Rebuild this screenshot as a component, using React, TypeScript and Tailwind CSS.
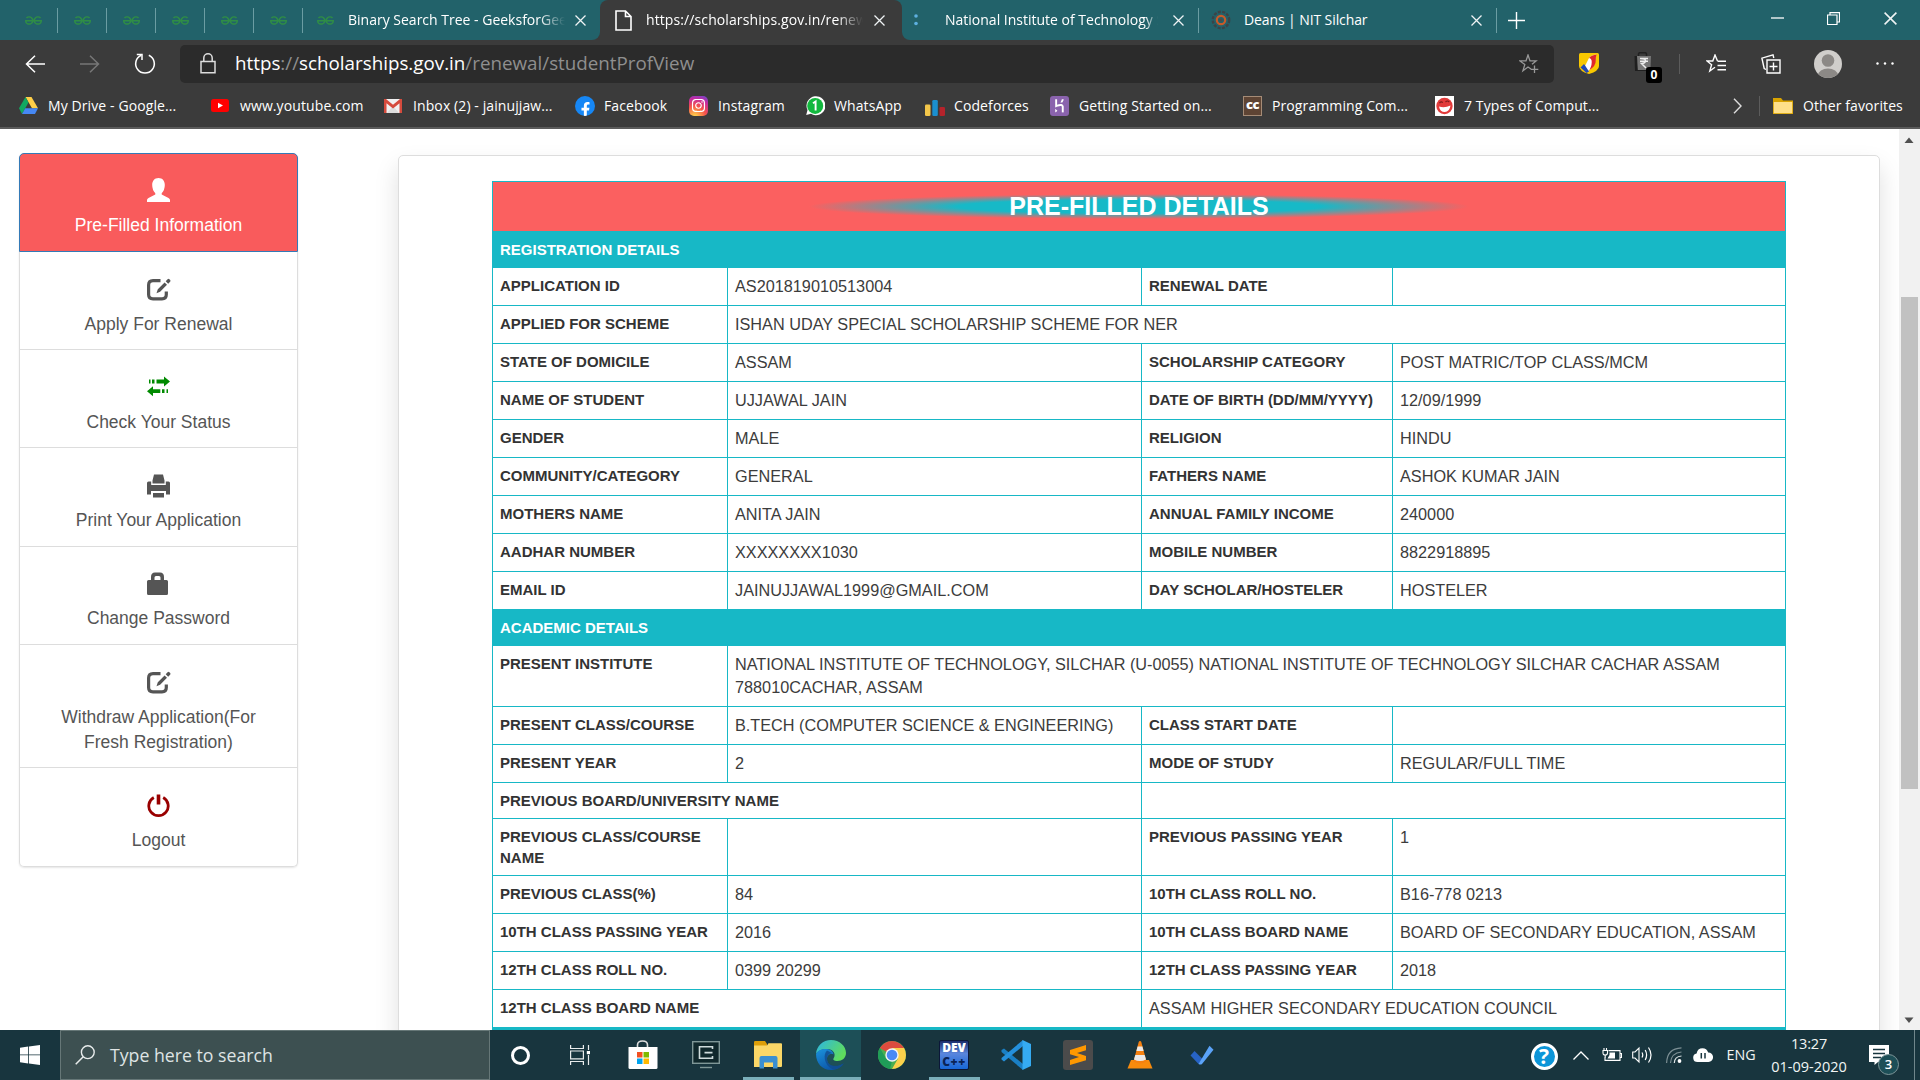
import React from "react";
import { SiGeeksforgeeks, SiHeroku } from "react-icons/si";
import { FaInstagram, FaFacebookF } from "react-icons/fa";

type Kids = { children?: React.ReactNode };

/* ---------- small building blocks ---------- */

function Slot({ w, children }: Kids & { w: string }) {
  return <div className={`flex h-full shrink-0 items-center justify-center ${w}`}>{children}</div>;
}

function CloseX({ size = 11 }: { size?: number }) {
  return (
    <svg width={size} height={size} viewBox="0 0 11 11" className="shrink-0">
      <path d="M0.5 0.5L10.5 10.5M10.5 0.5L0.5 10.5" stroke="#f0f4f5" strokeWidth="1.3" fill="none" />
    </svg>
  );
}

function TabDivider() {
  return <div className="h-[25px] w-px shrink-0 bg-[#6b9da3]" />;
}

function Gfg() {
  return <SiGeeksforgeeks className="text-[#2f8d46]" size={17} />;
}

/* ---------- tab strip ---------- */

function TabStrip() {
  return (
    <div className="flex h-10 shrink-0 bg-[#22626a] text-[14px] text-white">
      <div className="shrink-0 bg-[#3b3b3b]">
        <div className="flex h-10 w-[600px] items-center rounded-br-lg bg-[#22626a]">
          <Slot w="w-[9px]" />
          {[0, 1, 2, 3, 4, 5].map((i) => (
            <React.Fragment key={i}>
              <Slot w="w-[48px]">
                <Gfg />
              </Slot>
              <TabDivider />
            </React.Fragment>
          ))}
          <Slot w="w-[45px]">
            <Gfg />
          </Slot>
          <div className="w-[217px] shrink-0 overflow-hidden whitespace-nowrap pb-[2px] [mask-image:linear-gradient(to_right,black_88%,transparent)]">
            Binary Search Tree - GeeksforGeeks
          </div>
          <Slot w="w-[31px]">
            <CloseX />
          </Slot>
        </div>
      </div>
      <div className="flex h-10 w-[302px] shrink-0 items-center rounded-t-lg bg-[#3b3b3b]">
        <Slot w="w-[46px]">
          <svg width="17" height="21" viewBox="0 0 17 21">
            <path d="M1 1H10.5L16 6.5V20H1ZM10.5 1V6.5H16" fill="none" stroke="#fff" strokeWidth="1.6" />
          </svg>
        </Slot>
        <div className="w-[217px] shrink-0 overflow-hidden whitespace-nowrap pb-[2px] tracking-[0.1px] [mask-image:linear-gradient(to_right,black_88%,transparent)]">
          https://scholarships.gov.in/renewal/
        </div>
        <Slot w="w-[32px]">
          <CloseX />
        </Slot>
      </div>
      <div className="min-w-0 grow bg-[#3b3b3b]">
        <div className="flex h-10 items-center rounded-bl-lg bg-[#22626a]">
          <Slot w="w-[28px]">
            <svg width="6" height="12" viewBox="0 0 6 12">
              <circle cx="3" cy="2" r="1.8" fill="#5eb0e0" />
              <circle cx="3" cy="9.5" r="1.8" fill="#5eb0e0" />
            </svg>
          </Slot>
          <div className="ml-[15px] w-[213px] shrink-0 overflow-hidden whitespace-nowrap pb-[2px] [mask-image:linear-gradient(to_right,black_94%,transparent)]">
            National Institute of Technology Silchar
          </div>
          <Slot w="w-[40px]">
            <CloseX />
          </Slot>
          <TabDivider />
          <Slot w="w-[44px]">
            <svg width="20" height="20" viewBox="0 0 20 20">
              <circle cx="10" cy="10" r="8.2" fill="none" stroke="#3a4448" strokeWidth="2.4" strokeDasharray="3 1.4" />
              <circle cx="10" cy="10" r="4.2" fill="none" stroke="#c65a2a" strokeWidth="2.2" />
              <circle cx="10" cy="10" r="1.5" fill="#4b4a48" />
            </svg>
          </Slot>
          <div className="w-[213px] shrink-0 pb-[2px] pl-px tracking-[-0.1px]">Deans | NIT Silchar</div>
          <Slot w="w-[40px]">
            <CloseX />
          </Slot>
          <TabDivider />
          <Slot w="w-[39px]">
            <svg width="17" height="17" viewBox="0 0 17 17">
              <path d="M8.5 0V17M0 8.5H17" stroke="#fff" strokeWidth="1.4" />
            </svg>
          </Slot>
          <div className="grow" />
          <div className="flex h-full items-center pb-1">
            <Slot w="w-[56px]">
              <svg width="13" height="2" viewBox="0 0 13 2">
                <path d="M0 1H13" stroke="#fff" strokeWidth="1.3" />
              </svg>
            </Slot>
            <Slot w="w-[56px]">
              <svg width="13" height="13" viewBox="0 0 13 13">
                <path d="M0.5 3H10V12.5H0.5ZM3 3V0.6H12.5V10H10" fill="none" stroke="#fff" strokeWidth="1.2" />
              </svg>
            </Slot>
            <Slot w="w-[59px]">
              <CloseX size={13} />
            </Slot>
          </div>
        </div>
      </div>
    </div>
  );
}

/* ---------- address bar ---------- */

function AddressRow() {
  return (
    <div className="flex h-[47px] shrink-0 items-center">
      <Slot w="w-[70px]">
        <svg width="20" height="18" viewBox="0 0 20 18">
          <path d="M20 9H1.5M10 0.8L1.5 9L10 17.2" fill="none" stroke="#fff" strokeWidth="1.5" />
        </svg>
      </Slot>
      <Slot w="w-[40px]">
        <svg width="20" height="18" viewBox="0 0 20 18">
          <path d="M0 9H18.500M10 0.8L18.500 9L10 17.2" fill="none" stroke="#777" strokeWidth="1.5" />
        </svg>
      </Slot>
      <Slot w="w-[70px]">
        <svg width="22" height="22" viewBox="0 0 22 22">
          <path d="M7.200 2.300A9.300 9.300 0 1 0 14.800 2.300" fill="none" stroke="#fff" strokeWidth="1.5" />
          <path d="M2.800 1.400H8V7" fill="none" stroke="#fff" strokeWidth="1.5" />
        </svg>
      </Slot>
      <div className="flex h-[38px] w-[1374px] shrink-0 items-center rounded-[5px] bg-[#2b2b2b]">
        <Slot w="w-[55px]">
          <svg width="16" height="21" viewBox="0 0 16 21">
            <path d="M1 8.500H15V19.800H1ZM3.800 8.500V5A4.200 4.200 0 0 1 12.200 5V8.500" fill="none" stroke="#ddd" strokeWidth="1.5" />
          </svg>
        </Slot>
        <div className="grow whitespace-nowrap text-[18.8px] text-[#8f8f8f]">
          <span className="text-white">https</span>://<span className="text-white">scholarships.gov.in</span>
          /renewal/studentProfView
        </div>
        <Slot w="w-[50px]">
          <svg width="20" height="20" viewBox="0 0 20 20">
            <path d="M12 15L9 13L3.900 16.800L5.800 10.600L0.900 6.900H7L9 1L11 6.900H17.100L13 10.200" fill="none" stroke="#999" strokeWidth="1.300" />
            <path d="M15.500 11.500V19M11.700 15.300H19.300" stroke="#999" strokeWidth="1.300" />
          </svg>
        </Slot>
      </div>
      <Slot w="w-[70px]">
        <svg width="20" height="21" viewBox="0 0 20 21">
          <path d="M0 1.500Q0 0 1.500 0H18.500Q20 0 20 1.500V13Q20 18 10 21Q0 18 0 13Z" fill="#f9c800" />
          <path d="M6 13L10 5Q12 2 17.500 1.500Q16.500 6 16 9Q15 14 9 18Z" fill="#fff" />
          <path d="M10 5Q12 2 17.800 1.500Q16.500 4 16.800 7Q17 13 10.500 17Q13.500 11 12.500 7Q11.500 5 10 5Z" fill="#e0262b" />
          <path d="M1.500 14.500L5 11L10 18.500L7.500 20Z" fill="#2349b5" />
        </svg>
      </Slot>
      <Slot w="w-[40px]">
        <div className="relative h-[24px] w-[20px]">
          <svg width="18" height="20" viewBox="0 0 18 20">
            <path d="M0.500 4H17L16 19H1Z" fill="#1f1f1f" />
            <path d="M4.500 5V2Q4.500 0.700 6 0.700H11Q12.500 0.700 12.500 2V5" fill="none" stroke="#222" strokeWidth="1.500" />
            <path d="M3 4H17L16.500 18H3.800Z" fill="#777" />
            <path d="M6 6.500H14M6 9.200H14M6.500 6.500Q12 6.500 11.500 9.200Q11 11.500 7.500 11.500L12 16" fill="none" stroke="#eee" strokeWidth="1.500" />
          </svg>
          <div className="absolute left-[12px] top-[15px] flex h-[16px] w-[16px] items-center justify-center rounded-[3px] bg-black text-[12px] font-bold text-white">
            0
          </div>
        </div>
      </Slot>
      <Slot w="w-[31px]">
        <div className="h-5 w-px bg-[#5c5c5c]" />
      </Slot>
      <Slot w="w-[42px]">
        <svg width="21" height="20" viewBox="0 0 21 20">
          <path d="M11.500 7L9 1L6.800 7H1L5.600 10.700L3.800 17L9 13.300" fill="none" stroke="#fff" strokeWidth="1.400" />
          <path d="M11.500 7.200H20M11.500 11.500H20M11.500 15.800H20" stroke="#fff" strokeWidth="1.500" />
        </svg>
      </Slot>
      <Slot w="w-[68px]">
        <svg width="20" height="20" viewBox="0 0 20 20">
          <path d="M6 6H19V19H6Z" fill="none" stroke="#fff" strokeWidth="1.400" />
          <path d="M12.500 8.500V16.500M8.500 12.500H16.500M5 15.500L3.200 14.500L0.900 4.200L12 0.900L12.800 4" fill="none" stroke="#fff" strokeWidth="1.400" />
        </svg>
      </Slot>
      <Slot w="w-[46px]">
        <svg width="28" height="28" viewBox="0 0 28 28">
          <defs>
            <clipPath id="avatarRound">
              <circle cx="14" cy="14" r="14" />
            </clipPath>
          </defs>
          <g clipPath="url(#avatarRound)">
            <rect width="28" height="28" fill="#d0cecb" />
            <circle cx="14" cy="10.500" r="6.300" fill="#8c8986" />
            <ellipse cx="14" cy="25.500" rx="10" ry="7" fill="#8c8986" />
          </g>
        </svg>
      </Slot>
      <Slot w="w-[68px]">
        <svg width="18" height="3" viewBox="0 0 18 3">
          <circle cx="1.500" cy="1.500" r="1.200" fill="#fff" />
          <circle cx="9" cy="1.500" r="1.200" fill="#fff" />
          <circle cx="16.500" cy="1.500" r="1.200" fill="#fff" />
        </svg>
      </Slot>
    </div>
  );
}

/* ---------- bookmarks ---------- */

function DriveIcon() {
  return (
    <svg width="19" height="17" viewBox="0 0 19 17">
      <path d="M6.500 0H12.500L19 11.300H13Z" fill="#ffcf48" />
      <path d="M6.500 0L0 11.300L3 17L9.500 5.500Z" fill="#11a861" />
      <path d="M3 17L6.200 11.300H19L16 17Z" fill="#4688f4" />
    </svg>
  );
}
function YoutubeIcon() {
  return (
    <svg width="18" height="13" viewBox="0 0 18 13">
      <rect width="18" height="13" rx="2.500" fill="#f00" />
      <path d="M7 3.700L12 6.500L7 9.300Z" fill="#fff" />
    </svg>
  );
}
function GmailIcon() {
  return (
    <svg width="18" height="14" viewBox="0 0 18 14">
      <rect width="18" height="14" rx="1" fill="#f1f1f1" />
      <path d="M3 14L9 7L15 14Z" fill="#ddd" />
      <path d="M0 0H2L9 5.800L16 0H18V14H15.500V4.300L9 9.400L2.500 4.300V14H0Z" fill="#d54b3d" />
    </svg>
  );
}
function FacebookIcon() {
  return (
    <div className="flex h-5 w-5 items-end justify-center overflow-hidden rounded-full bg-[#1687f5]">
      <FaFacebookF size={15} color="#fff" className="-mb-px" />
    </div>
  );
}
function InstaIcon() {
  return (
    <div className="flex h-5 w-[19px] items-center justify-center rounded-[5px] bg-[radial-gradient(circle_at_30%_105%,#fdc74a_8%,#f5524b_45%,#c32aa3_75%,#5a4fd6_100%)]">
      <FaInstagram size={15} color="#fff" />
    </div>
  );
}
function WhatsappIcon() {
  return (
    <svg width="20" height="20" viewBox="0 0 20 20">
      <path d="M1.200 19L2.500 14A9.500 9.500 0 1 1 6 17.800Z" fill="#fff" />
      <circle cx="10.200" cy="9.900" r="8" fill="#12b83e" />
      <path d="M8 7.200L10.600 5.500V14.500" fill="none" stroke="#fff" strokeWidth="1.900" />
    </svg>
  );
}
function CodeforcesIcon() {
  return (
    <svg width="20" height="17" viewBox="0 0 20 17" className="mt-1">
      <rect x="0" y="5.500" width="5.500" height="11.500" rx="1.300" fill="#f3c64a" />
      <rect x="7.300" y="1" width="5.500" height="16" rx="1.300" fill="#1b8fcf" />
      <rect x="14.500" y="8" width="5.500" height="9" rx="1.300" fill="#b5232b" />
    </svg>
  );
}
function HerokuIcon() {
  return (
    <div className="flex h-5 w-[19px] items-center justify-center overflow-hidden rounded-[3px] bg-[#8a63ad]">
      <SiHeroku size={20} color="#fff" className="[clip-path:inset(3px_4px)]" />
    </div>
  );
}
function CcIcon() {
  return (
    <div className="flex h-5 w-[19px] items-center justify-center border border-[#a58b76] bg-[#5e4434] pb-[2px] text-[13px] font-extrabold tracking-[-0.5px] text-white">
      cc
    </div>
  );
}
function RedditishIcon() {
  return (
    <svg width="19" height="20" viewBox="0 0 19 20">
      <rect width="19" height="20" fill="#fff" />
      <circle cx="9.500" cy="10" r="8.200" fill="#e23b3b" />
      <path d="M4 10.500Q9.500 12.500 15.500 9.500Q14.500 16 9.800 16Q5 16 4 10.500Z" fill="#fff" />
      <path d="M4.500 7.200Q6 5 7.800 6.600M10.500 6Q12.500 4 14.200 6" fill="none" stroke="#7d1d1d" strokeWidth="1.200" />
    </svg>
  );
}

const bookmarks = [
  { w: "w-[192px]", icon: <DriveIcon />, t: "My Drive - Google..." },
  { w: "w-[173px]", icon: <YoutubeIcon />, t: "www.youtube.com" },
  { w: "w-[191px]", icon: <GmailIcon />, t: "Inbox (2) - jainujjaw..." },
  { w: "w-[114px]", icon: <FacebookIcon />, t: "Facebook" },
  { w: "w-[116px]", icon: <InstaIcon />, t: "Instagram" },
  { w: "w-[120px]", icon: <WhatsappIcon />, t: "WhatsApp" },
  { w: "w-[125px]", icon: <CodeforcesIcon />, t: "Codeforces" },
  { w: "w-[193px]", icon: <HerokuIcon />, t: "Getting Started on..." },
  { w: "w-[192px]", icon: <CcIcon />, t: "Programming Com..." },
  { w: "w-[190px]", icon: <RedditishIcon />, t: "7 Types of Comput..." },
];

function Bookmarks() {
  return (
    <div className="flex h-[42px] shrink-0 items-center border-b-2 border-[#5b5b5b] pb-[3px] pl-[19px] text-[14px] tracking-[0.1px] text-white">
      {bookmarks.map((b) => (
        <div key={b.t} className={`flex shrink-0 items-center whitespace-nowrap ${b.w}`}>
          <div className="flex w-[29px] shrink-0 items-center">{b.icon}</div>
          <span className="-mt-px">{b.t}</span>
        </div>
      ))}
      <div className="grow" />
      <svg width="9" height="16" viewBox="0 0 9 16">
        <path d="M1 0.800L8 8L1 15.200" fill="none" stroke="#ddd" strokeWidth="1.400" />
      </svg>
      <div className="ml-[17px] h-5 w-px bg-[#5c5c5c]" />
      <svg width="20" height="16" viewBox="0 0 20 16" className="ml-[13px]">
        <path d="M0 0H8L10 2.500H20V16H0Z" fill="#d9a300" />
        <path d="M0.800 4H19.200V15.200H0.800Z" fill="#ffe08a" />
      </svg>
      <div className="-mt-px ml-[10px] w-[117px] whitespace-nowrap">Other favorites</div>
    </div>
  );
}

/* ---------- sidebar ---------- */

const UserGlyph = () => (
  <svg width="23" height="24" viewBox="0 0 23 24">
    <path d="M11.500 0C7.500 0 5.200 2.800 5.200 7Q5.200 12 8.300 15.200V16.500L1.500 20Q0 20.800 0 22V24H23V22Q23 20.800 21.500 20L14.700 16.500V15.200Q17.800 12 17.800 7C17.800 2.800 15.500 0 11.500 0Z" fill="#fff" />
  </svg>
);
const EditGlyph = () => (
  <svg width="24" height="24" viewBox="0 0 24 24">
    <path d="M13.500 2.600H6Q1.600 2.600 1.600 7V16.500Q1.600 20.800 6 20.800H15Q19.300 20.800 19.300 16.500V13.500" fill="none" stroke="#555" strokeWidth="3.200" />
    <path d="M9.500 15.200L10.800 11.300L17.600 4.400L20 6.800L13.100 13.800ZM18.700 3.200L20.600 1.200Q21.500 0.500 22.400 1.300L23.200 2.100Q23.900 3 23.100 3.800L21.200 5.700Z" fill="#555" />
  </svg>
);
const TransferGlyph = () => (
  <svg width="23" height="24" viewBox="0 0 23 24">
    <path d="M2 3.500H3.500V7.500H2ZM5 3.500H7.500V7.500H5ZM9.500 3.500H17V0.500L23 5.500L17 10.500V7.500H9.500ZM21 13.300H19.500V17H21ZM17.500 13.300H15V17H17.500ZM13.300 13.300H6V10.300L0 15.200L6 20.300V17H13.300Z" fill="#008a00" />
  </svg>
);
const PrintGlyph = () => (
  <svg width="23" height="24" viewBox="0 0 23 24">
    <path d="M7 0.500H16L17.500 6.500V9.500H5.500V6.500ZM0 9Q0 7.500 1.500 7.500H4.200V11H18.800V7.500H21.500Q23 7.500 23 9V20.500H19V17H4V20.500H0ZM6 19H17V23.500H6Z" fill="#555" />
  </svg>
);
const LockGlyph = () => (
  <svg width="23" height="24" viewBox="0 0 23 24">
    <path d="M0 9.500Q0 8 1.500 8H4V5Q4 0.500 8 0.500H13Q17 0.500 17 5V8H19.500Q21 8 21 9.500V21.500Q21 23 19.500 23H1.500Q0 23 0 21.500ZM7.500 8H13.500V5.500Q13.500 4 12 4H9Q7.500 4 7.500 5.500Z" fill="#555" />
  </svg>
);
const PowerGlyph = () => (
  <svg width="23" height="24" viewBox="0 0 23 24">
    <path d="M6.800 3.500A9.700 9.700 0 1 0 16.200 3.500" fill="none" stroke="#900" strokeWidth="2.800" />
    <rect x="9.700" y="0.500" width="3.600" height="10" fill="#900" />
  </svg>
);

const menu = [
  { h: "h-[98px] pt-[26px]", icon: <EditGlyph />, t: "Apply For Renewal" },
  { h: "h-[98px] pt-[26px]", icon: <TransferGlyph />, t: "Check Your Status" },
  { h: "h-[99px] pt-[26px]", icon: <PrintGlyph />, t: "Print Your Application" },
  { h: "h-[98px] pt-[25px]", icon: <LockGlyph />, t: "Change Password" },
  { h: "h-[123px] pt-[26px]", icon: <EditGlyph />, t: "Withdraw Application(For Fresh Registration)" },
  { h: "h-[99px] pt-[26px]", icon: <PowerGlyph />, t: "Logout" },
];

function Sidebar() {
  return (
    <div className="ml-[19px] mt-6 w-[279px] shrink-0 self-start rounded-[5px] text-center text-[17.5px] leading-[25px] text-[#555] shadow-[0_1px_2px_rgba(0,0,0,0.1)]">
      <div className="flex h-[99px] flex-col items-center gap-[11px] rounded-t-[5px] border border-[#337ab7] bg-[#f95b5c] pt-6 text-white">
        <UserGlyph />
        <div>Pre-Filled Information</div>
      </div>
      {menu.map((m) => (
        <div
          key={m.t}
          className={`flex flex-col items-center gap-[10px] border-x border-b border-[#ddd] bg-white px-[30px] last:rounded-b-[5px] ${m.h}`}
        >
          <div className="h-6">{m.icon}</div>
          <div>{m.t}</div>
        </div>
      ))}
    </div>
  );
}

/* ---------- details table ---------- */

type Cell = [kind: "l" | "v", text: string, span?: string];
const rowsA: Cell[][] = [
  [["l", "APPLICATION ID"], ["v", "AS201819010513004"], ["l", "RENEWAL DATE"], ["v", ""]],
  [["l", "APPLIED FOR SCHEME"], ["v", "ISHAN UDAY SPECIAL SCHOLARSHIP SCHEME FOR NER", "col-span-3"]],
  [["l", "STATE OF DOMICILE"], ["v", "ASSAM"], ["l", "SCHOLARSHIP CATEGORY"], ["v", "POST MATRIC/TOP CLASS/MCM"]],
  [["l", "NAME OF STUDENT"], ["v", "UJJAWAL JAIN"], ["l", "DATE OF BIRTH (DD/MM/YYYY)"], ["v", "12/09/1999"]],
  [["l", "GENDER"], ["v", "MALE"], ["l", "RELIGION"], ["v", "HINDU"]],
  [["l", "COMMUNITY/CATEGORY"], ["v", "GENERAL"], ["l", "FATHERS NAME"], ["v", "ASHOK KUMAR JAIN"]],
  [["l", "MOTHERS NAME"], ["v", "ANITA JAIN"], ["l", "ANNUAL FAMILY INCOME"], ["v", "240000"]],
  [["l", "AADHAR NUMBER"], ["v", "XXXXXXXX1030"], ["l", "MOBILE NUMBER"], ["v", "8822918895"]],
  [["l", "EMAIL ID"], ["v", "JAINUJJAWAL1999@GMAIL.COM"], ["l", "DAY SCHOLAR/HOSTELER"], ["v", "HOSTELER"]],
];
const rowsB: { h?: string; cells: Cell[] }[] = [
  {
    h: "h-[61px]",
    cells: [
      ["l", "PRESENT INSTITUTE"],
      [
        "v",
        "NATIONAL INSTITUTE OF TECHNOLOGY, SILCHAR (U-0055) NATIONAL INSTITUTE OF TECHNOLOGY SILCHAR CACHAR ASSAM 788010CACHAR, ASSAM",
        "col-span-3",
      ],
    ],
  },
  { cells: [["l", "PRESENT CLASS/COURSE"], ["v", "B.TECH (COMPUTER SCIENCE & ENGINEERING)"], ["l", "CLASS START DATE"], ["v", ""]] },
  { cells: [["l", "PRESENT YEAR"], ["v", "2"], ["l", "MODE OF STUDY"], ["v", "REGULAR/FULL TIME"]] },
  { h: "h-[36px]", cells: [["l", "PREVIOUS BOARD/UNIVERSITY NAME", "col-span-2"], ["v", "", "col-span-2"]] },
  { h: "h-[57px]", cells: [["l", "PREVIOUS CLASS/COURSE NAME"], ["v", ""], ["l", "PREVIOUS PASSING YEAR"], ["v", "1"]] },
  { cells: [["l", "PREVIOUS CLASS(%)"], ["v", "84"], ["l", "10TH CLASS ROLL NO."], ["v", "B16-778 0213"]] },
  { cells: [["l", "10TH CLASS PASSING YEAR"], ["v", "2016"], ["l", "10TH CLASS BOARD NAME"], ["v", "BOARD OF SECONDARY EDUCATION, ASSAM"]] },
  { cells: [["l", "12TH CLASS ROLL NO."], ["v", "0399 20299"], ["l", "12TH CLASS PASSING YEAR"], ["v", "2018"]] },
  { cells: [["l", "12TH CLASS BOARD NAME", "col-span-2"], ["v", "ASSAM HIGHER SECONDARY EDUCATION COUNCIL", "col-span-2"]] },
];

function Row({ cells, h = "h-[38px]" }: { cells: Cell[]; h?: string }) {
  return (
    <div className={`grid shrink-0 grid-cols-[235px_414px_251px_392px] border-b border-[#17b8c6] ${h}`}>
      {cells.map(([kind, text, span], i) => (
        <div
          key={i}
          className={`border-r border-[#17b8c6] px-[7px] pt-[7px] last:border-r-0 ${
            kind === "l" ? "text-[15px] font-bold leading-[21.4px]" : "text-[16.25px] leading-[23.2px] text-[#3c3c3c]"
          } ${span ?? ""}`}
        >
          {text}
        </div>
      ))}
    </div>
  );
}

function SectionHead({ children }: Kids) {
  return (
    <div className="h-[36px] shrink-0 bg-[#17b8c6] px-[7px] pt-[7px] text-[15px] font-bold leading-[21.4px] text-white">
      {children}
    </div>
  );
}

function Details() {
  return (
    <div className="ml-[100px] mt-[26px] h-[1000px] w-[1482px] shrink-0 rounded-[5px] border border-[#ddd] bg-white pl-[93px] pt-[25px] shadow-[0_12px_24px_rgba(0,0,0,0.13)]">
      <div className="flex w-[1294px] flex-col border border-[#17b8c6] text-[#333]">
        <div className="flex h-[50px] shrink-0 items-center justify-center border-b border-[#17b8c6] bg-[#fb6060] bg-[radial-gradient(330px_12.5px_at_50%_50%,#17b9c7_55%,#fb6060_100%)] text-[25px] font-bold text-white">
          PRE-FILLED DETAILS
        </div>
        <SectionHead>REGISTRATION DETAILS</SectionHead>
        {rowsA.map((cells, i) => (
          <Row key={i} cells={cells} />
        ))}
        <SectionHead>ACADEMIC DETAILS</SectionHead>
        {rowsB.map((r, i) => (
          <Row key={i} cells={r.cells} h={r.h} />
        ))}
        <div className="h-[36px] shrink-0 bg-[#17b8c6]" />
      </div>
    </div>
  );
}

function Scrollbar() {
  return (
    <div className="z-10 ml-auto flex w-[21px] shrink-0 flex-col items-center bg-[#f1f1f1] pr-px">
      <svg width="10" height="22" viewBox="0 0 10 22">
        <path d="M0.500 14L5 8.500L9.500 14Z" fill="#505050" />
      </svg>
      <div className="mt-[146px] h-[492px] w-[17px] bg-[#c1c1c1]" />
      <div className="grow" />
      <svg width="10" height="22" viewBox="0 0 10 22">
        <path d="M0.500 9.500L5 15L9.500 9.500Z" fill="#505050" />
      </svg>
    </div>
  );
}

/* ---------- taskbar ---------- */

function TaskItem({ w, bar, active, children }: Kids & { w: string; bar?: string; active?: boolean }) {
  return (
    <div className={`relative flex h-full shrink-0 items-center justify-center ${active ? "bg-[#1d4f57]" : ""} ${w}`}>
      {children}
      {bar && <div className={`absolute bottom-0 h-[3px] bg-[#7aaeb9] ${bar}`} />}
    </div>
  );
}

function Taskbar() {
  return (
    <div className="flex h-[50px] shrink-0 bg-[#18353e] text-[#f2f5f5]">
      <Slot w="w-[60px]">
        <svg width="20" height="20" viewBox="0 0 20 20">
          <path d="M0 2.800L8.200 1.600V9.500H0ZM9 1.500L20 0V9.500H9ZM0 10.300H8.200V18.400L0 17.200ZM9 10.300H20V20L9 18.500Z" fill="#fff" />
        </svg>
      </Slot>
      <div className="flex w-[430px] shrink-0 items-center border border-[#667777] bg-[#3d5051] pl-[14px] text-[17.7px] text-[#dfe4e4]">
        <svg width="20" height="20" viewBox="0 0 20 20">
          <circle cx="12.800" cy="7.200" r="6.400" fill="none" stroke="#e8ecec" strokeWidth="1.400" />
          <path d="M8.200 11.800L0.700 19.300" stroke="#e8ecec" strokeWidth="1.500" />
        </svg>
        <span className="ml-[15px]">Type here to search</span>
      </div>
      <TaskItem w="w-[60px]">
        <div className="h-[19px] w-[19px] rounded-full border-[3px] border-white" />
      </TaskItem>
      <TaskItem w="w-[60px]">
        <svg width="20" height="20" viewBox="0 0 20 20">
          <path d="M0.600 0V3.500H13.400V0M0.600 20V16.500H13.400V20M0.600 6H13.400V13.800H0.600ZM18.500 0V5M18.500 10V20" fill="none" stroke="#e8ecec" strokeWidth="1.200" />
          <rect x="16.800" y="6" width="3.200" height="3.200" fill="#fff" />
        </svg>
      </TaskItem>
      <TaskItem w="w-[66px]">
        <svg width="30" height="30" viewBox="0 0 30 30">
          <path d="M9.500 8V5Q9.500 1 14.500 1Q19.500 1 19.500 5V8" fill="none" stroke="#ddd" strokeWidth="1.600" />
          <path d="M0.500 7H29.500V27.500Q29.500 29 28 29H2Q0.500 29 0.500 27.500Z" fill="#fff" />
          <path d="M9 12H14.500V17.500H9Z" fill="#f25022" />
          <path d="M15.500 12H21V17.500H15.500Z" fill="#7fba00" />
          <path d="M9 18.500H14.500V24H9Z" fill="#00a4ef" />
          <path d="M15.500 18.500H21V24H15.500Z" fill="#ffb900" />
        </svg>
      </TaskItem>
      <TaskItem w="w-[60px]">
        <svg width="28" height="28" viewBox="0 0 28 28">
          <rect x="0.700" y="0.700" width="26.600" height="21.600" fill="#10282c" stroke="#7f9797" strokeWidth="1.400" />
          <path d="M20.500 8V5.800H7.500V17.300H20.500V15M20.500 11.600H12.500" fill="none" stroke="#cfdcdc" strokeWidth="1.600" />
          <path d="M8 26.500H20" stroke="#7f9797" strokeWidth="1.400" />
        </svg>
      </TaskItem>
      <TaskItem w="w-[64px]" bar="w-[51px]">
        <svg width="28" height="28" viewBox="0 0 28 28">
          <path d="M0 1.200Q0 0 1.200 0H11L13 3V8H0Z" fill="#dd9e08" />
          <path d="M0 4.500H13L14.500 2.300H27Q28 2.300 28 3.300V25Q28 26 27 26H0Z" fill="#fbd767" />
          <path d="M5.500 27.500V17Q5.500 15 7.500 15H21.500Q23.500 15 23.500 17V27.500H19V21.500H10V27.500Z" fill="#3b8fd0" />
        </svg>
      </TaskItem>
      <TaskItem w="w-[61px]" bar="w-full" active>
        <svg width="30" height="30" viewBox="0 0 30 30">
          <defs>
            <linearGradient id="edgeTop" x1="0" y1="0" x2="1" y2="0.500">
              <stop offset="0" stopColor="#2bb5e8" />
              <stop offset="1" stopColor="#5fdc5c" />
            </linearGradient>
            <linearGradient id="edgeLow" x1="0" y1="0" x2="0.600" y2="1">
              <stop offset="0" stopColor="#1b93dd" />
              <stop offset="1" stopColor="#0c54a5" />
            </linearGradient>
          </defs>
          <path d="M0 14C0.500 6 7 0 15 0C23.500 0 30 6 30 13C30 18 26 21 21.500 21C18 21 16.800 19.700 17.500 18.500C20.500 14 17 9 11 9C6 9 1.500 11 0 14Z" fill="url(#edgeTop)" />
          <path d="M0 14C1.500 10.500 6 8.500 11 9C15 9.500 17.500 12 17.500 14.500C15 12.500 11 15 11 19C11 26 19 29 27.500 23.500C25 27.500 20.500 30 15 30C6 30 0 23 0 14Z" fill="url(#edgeLow)" />
          <path d="M11 10.500C7 14 7.500 25 17 29.500C22 29 26 26.500 27.800 23.200C19 28.500 11 25 11 19C11 15 14 13 16 13Z" fill="#114b8f" opacity="0.800" />
        </svg>
      </TaskItem>
      <TaskItem w="w-[62px]">
        <svg width="28" height="28" viewBox="0 0 28 28">
          <circle cx="14" cy="14" r="14" fill="#4caf50" />
          <path d="M14 14L1.900 7A14 14 0 0 1 26.100 7H14Z" fill="#dd4b3e" />
          <path d="M14 7H26.100A14 14 0 0 1 14 28L20 17.500Z" fill="#fcd04b" />
          <path d="M1.900 7L8 17.500L14 20L12 27.900A14 14 0 0 1 1.900 7Z" fill="#1f9d58" />
          <circle cx="14" cy="14" r="6.700" fill="#f4f4f4" />
          <circle cx="14" cy="14" r="5.300" fill="#4a8af4" />
        </svg>
      </TaskItem>
      <TaskItem w="w-[62px]" bar="w-[51px]">
        <div className="flex h-[30px] w-[30px] flex-col items-center justify-center overflow-hidden rounded-[2px] border border-[#0b1738] bg-[linear-gradient(#1b2c6b,#5a86dd_45%,#1767d8)] text-[12px] font-extrabold leading-[14px]">
          <div className="h-[14px] overflow-hidden text-white">DEV</div>
          <div className="h-[14px] overflow-hidden tracking-[0.5px] text-[#0a2357]">C++</div>
        </div>
      </TaskItem>
      <TaskItem w="w-[62px]">
        <svg width="30" height="30" viewBox="0 0 30 30">
          <path d="M0.500 10L3 8.500L22 24V30L0.500 12Z" fill="#1a7fc4" />
          <path d="M0.500 19.500L3 21.500L22 6V0L0.500 18Z" fill="#2490dc" />
          <path d="M21.500 0L30 4V26L21.500 30Z" fill="#35abf2" />
        </svg>
      </TaskItem>
      <TaskItem w="w-[62px]">
        <div className="flex h-[30px] w-[30px] items-center justify-center rounded-[3px] bg-[#4b4b4b]">
          <svg width="16" height="20" viewBox="0 0 16 20">
            <path d="M16 0V5.200L7 8L16 11V15.200L0 20V15L9 12L0 9.200V5Z" fill="#ff9800" />
          </svg>
        </div>
      </TaskItem>
      <TaskItem w="w-[62px]">
        <svg width="26" height="28" viewBox="0 0 26 28">
          <path d="M4 19H22L25.500 27.500H0.500Z" fill="#f78b0d" />
          <path d="M13 0Q14 0 14.300 1L19.500 20.500Q13 24.500 6.500 20.500L11.700 1Q12 0 13 0Z" fill="#f58110" />
          <path d="M10.600 5.500H15.400L16.600 10H9.400ZM8.300 14H17.700L19 18.500Q13 21.500 7 18.500Z" fill="#e9e9e9" />
        </svg>
      </TaskItem>
      <TaskItem w="w-[61px]">
        <svg width="24" height="20" viewBox="0 0 24 20">
          <path d="M0.500 10.500L4.500 6L12.500 14L8.500 19Z" fill="#2763c4" />
          <path d="M8.500 19L19.500 0.800L23.500 4.800L12 19Q10.500 20 8.500 19Z" fill="#5ba3f8" />
        </svg>
      </TaskItem>
      <div className="grow" />
      <Slot w="w-[36px]">
        <div className="mt-[3px] flex h-[27px] w-[27px] items-center justify-center rounded-full border-[3px] border-white bg-[#0c95d8] text-[21px] font-bold leading-none text-white">
          ?
        </div>
      </Slot>
      <Slot w="w-[38px]">
        <svg width="16" height="9" viewBox="0 0 16 9">
          <path d="M0.500 8.500L8 1L15.500 8.500" fill="none" stroke="#fff" strokeWidth="1.300" />
        </svg>
      </Slot>
      <Slot w="w-[24px]">
        <svg width="20" height="14" viewBox="0 0 20 14">
          <path d="M6.500 2.600H18V12.400H3V9M18.500 5.500H19.500V9.500H18.500M1 2.500H5.500V5Q5.500 7 3.200 7Q1 7 1 5ZM2 2.500V0M4.500 2.500V0M3.200 7V10" fill="none" stroke="#fff" strokeWidth="1.100" />
          <path d="M7.500 4.500H13V10.500H5.500L7.500 7Z" fill="#fff" />
        </svg>
      </Slot>
      <Slot w="w-[36px]">
        <svg width="21" height="18" viewBox="0 0 21 18">
          <path d="M0.700 6H3L7 2V16L3 12H0.700Z" fill="none" stroke="#fff" strokeWidth="1.100" />
          <path d="M10 6.500Q11.500 9 10 11.500M13.200 4Q16 9 13.200 14M16.500 1.500Q21.500 9 16.500 16.500" fill="none" stroke="#fff" strokeWidth="1.200" />
        </svg>
      </Slot>
      <Slot w="w-[28px]">
        <svg width="16" height="16" viewBox="0 0 16 16">
          <path d="M0.600 16Q1 1.500 15.500 0.800M4.500 16Q5 6 15.500 5" fill="none" stroke="#7d9095" strokeWidth="1.200" />
          <path d="M8.300 16Q8.500 9.500 15.500 9" fill="none" stroke="#dfe6e7" strokeWidth="1.200" />
          <circle cx="13.500" cy="14" r="1.900" fill="#fff" />
        </svg>
      </Slot>
      <Slot w="w-[30px]">
        <svg width="20" height="14" viewBox="0 0 20 14">
          <path d="M4.500 14A4.300 4.300 0 0 1 3.600 5.500Q4.500 0.300 9.500 0.300Q13.800 0.300 15.200 4.600A4.700 4.700 0 0 1 15.500 14Z" fill="#fff" />
          <path d="M8.300 5V10.500M12 5V10.500" stroke="#18353e" strokeWidth="1.500" />
        </svg>
      </Slot>
      <Slot w="w-[46px]">
        <span className="text-[14.3px]">ENG</span>
      </Slot>
      <div className="flex w-[90px] shrink-0 flex-col items-center justify-center pb-px text-[14.5px] leading-[23px]">
        <span className="tracking-[-0.2px]">13:27</span>
        <span className="whitespace-nowrap">01-09-2020</span>
      </div>
      <div className="relative flex w-[60px] shrink-0 items-center pl-[15px]">
        <svg width="20" height="20" viewBox="0 0 20 20">
          <path d="M0 0H20V17H9L5.500 20V17H0Z" fill="#fff" />
          <path d="M4 4.500H16M4 8.500H16M4 12.500H12" stroke="#18353e" strokeWidth="1.300" />
        </svg>
        <div className="absolute left-[24px] top-[24px] flex h-[21px] w-[21px] items-center justify-center rounded-full border border-[#7d9598] bg-[#1d4f57] text-[13px] font-semibold text-white">
          3
        </div>
      </div>
      <div className="mr-[5px] w-px shrink-0 bg-[#70868b]" />
    </div>
  );
}

export default function App() {
  return (
    <div className="flex h-[1080px] w-[1920px] flex-col overflow-hidden bg-white font-['Open_Sans','Noto_Sans',sans-serif]">
      <div className="flex shrink-0 flex-col bg-[#3b3b3b]">
        <TabStrip />
        <AddressRow />
        <Bookmarks />
      </div>
      <div className="flex h-[901px] shrink-0 overflow-hidden bg-white font-['Liberation_Sans',Arial,sans-serif]">
        <Sidebar />
        <Details />
        <Scrollbar />
      </div>
      <Taskbar />
    </div>
  );
}
